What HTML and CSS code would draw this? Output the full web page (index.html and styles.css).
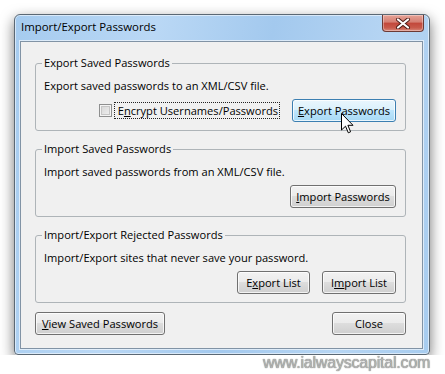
FILE: index.html
```html
<!DOCTYPE html>
<html>
<head>
<meta charset="utf-8">
<link rel="stylesheet" href="styles.css">
</head>
<body>
<div class="window">
  <div class="titlebar">
    <span class="title">Import/Export Passwords</span>
    <div class="close">
      <svg width="16" height="11" viewBox="0 0 16 11"><path d="M3 1.5 L13 9.5 M13 1.5 L3 9.5" stroke="#4a1a14" stroke-width="4" stroke-linecap="round"/><path d="M3 1.5 L13 9.5 M13 1.5 L3 9.5" stroke="#ffffff" stroke-width="2.2" stroke-linecap="round"/></svg>
    </div>
  </div>
  <div class="client">
    <fieldset class="group">
      <legend>Export Saved Passwords</legend>
      <p class="desc">Export saved passwords to an XML/CSV file.</p>
      <div class="row">
        <label class="check"><span class="box"></span><span class="focus">E<u>n</u>crypt Usernames/Passwords</span></label>
        <button class="btn hot w104"><u>E</u>xport Passwords</button>
      </div>
    </fieldset>
    <fieldset class="group">
      <legend>Import Saved Passwords</legend>
      <p class="desc">Import saved passwords from an XML/CSV file.</p>
      <div class="row">
        <button class="btn w106"><u>I</u>mport Passwords</button>
      </div>
    </fieldset>
    <fieldset class="group">
      <legend>Import/Export Rejected Passwords</legend>
      <p class="desc">Import/Export sites that never save your password.</p>
      <div class="row">
        <button class="btn w73">E<u>x</u>port List</button>
        <button class="btn w74 gap">I<u>m</u>port List</button>
      </div>
    </fieldset>
    <div class="footer">
      <button class="btn w130"><u>V</u>iew Saved Passwords</button>
      <button class="btn w74">Close</button>
    </div>
  </div>
</div>
<svg class="cursor" width="14" height="22" viewBox="0 0 14 22"><path d="M0.5 0.5 L0.5 17 L4.5 13.2 L7.3 19.8 L9.6 18.8 L6.9 12.3 L12 12.3 Z" fill="#ffffff" stroke="#000000" stroke-width="1" stroke-linejoin="miter"/></svg>
<div class="watermark">www.ialwayscapital.com</div>
</body>
</html>
```
FILE: styles.css
```css
html, body {
  margin: 0;
  padding: 0;
  background: #ffffff;
}
body {
  padding: 14px 0 0 14px;
  font-family: "Open Sans", "Noto Sans", sans-serif;
  font-size: 11.1px;
  color: #000;
}
.window {
  width: 416px;
  height: 341px;
  box-sizing: border-box;
  border: 1px solid #5b6874;
  border-radius: 6px 6px 4px 4px;
  background: linear-gradient(100deg, #a5cbef 0%, #bad8f5 30%, #a3c9ee 55%, #b6d5f3 80%, #a7ccef 100%);
  box-shadow: 0 5px 14px rgba(0,0,0,0.55), inset 0 0 0 1px rgba(255,255,255,0.55);
  display: flex;
  flex-direction: column;
}
.titlebar {
  height: 26px;
  display: flex;
  justify-content: space-between;
  align-items: flex-start;
  padding: 0 5px 0 6px;
}
.title {
  padding-top: 3px;
  line-height: 18px;
  font-size: 11.4px;
  color: #000;
}
.close {
  width: 42px;
  height: 17px;
  box-sizing: border-box;
  border: 1px solid #6c3a35;
  border-top: none;
  border-radius: 0 0 4px 4px;
  background: linear-gradient(#e6a296 0%, #d47e72 45%, #c2473a 50%, #c85a4b 80%, #d9897c 100%);
  display: flex;
  align-items: center;
  justify-content: center;
  box-shadow: inset 0 0 0 1px rgba(255,255,255,0.35);
}
.close svg { display: block; }
.client {
  margin: 0 6px 0 5px;
  height: 308px;
  box-sizing: border-box;
  border: 1px solid #8193a5;
  background: #f0f0f0;
  box-shadow: 0 0 0 1px rgba(255,255,255,0.6);
  padding: 13px 16px 14px 14px;
  display: flex;
  flex-direction: column;
}
.group {
  margin: 0 0 10px 0;
  padding: 0 9px 8px 8px;
  border: 1px solid #aeb4b8;
  border-radius: 3px;
  min-width: 0;
}
.group legend {
  padding: 0 2px;
  margin-left: -2px;
  line-height: 16px;
}
.desc {
  margin: 7px 0 0 0;
  line-height: 16px;
}
.row {
  margin-top: 5px;
  display: flex;
  justify-content: flex-end;
  align-items: center;
}
.check {
  display: flex;
  align-items: center;
  margin-right: 12px;
}
.box {
  width: 13px;
  height: 13px;
  box-sizing: border-box;
  border: 1px solid #8e8f8f;
  background: linear-gradient(135deg, #d3d3d3, #f3f3f3);
  box-shadow: inset 0 0 0 1px #f4f4f4, inset 0 0 0 2px #c6c6c6;
  margin-right: 2px;
}
.focus {
  border: 1px dotted #222;
  padding: 0 1px 0 3px;
  line-height: 15px;
}
.btn {
  height: 23px;
  box-sizing: border-box;
  font-family: inherit;
  font-size: inherit;
  color: #000;
  border: 1px solid #707070;
  border-radius: 3px;
  background: linear-gradient(#f2f2f2 0%, #ebebeb 49%, #dddddd 50%, #cfcfcf 100%);
  box-shadow: inset 0 0 0 1px rgba(255,255,255,0.75);
  padding: 0;
  margin: 0;
  line-height: 19px;
}
.btn.hot {
  border-color: #3c7fb1;
  background: linear-gradient(#eaf6fd 0%, #d9f0fc 49%, #bee6fd 50%, #a7d9f5 100%);
}
.w104 { width: 104px; }
.w106 { width: 106px; }
.w73 { width: 73px; }
.w74 { width: 74px; }
.w130 { width: 130px; }
.gap { margin-left: 12px; }
.footer {
  margin-top: -1px;
  display: flex;
  justify-content: space-between;
}
.cursor {
  position: absolute;
  left: 341px;
  top: 113px;
}
.watermark {
  position: absolute;
  left: 263px;
  top: 354px;
  font-family: "Liberation Sans", sans-serif;
  font-size: 16px;
  letter-spacing: -0.2px;
  color: #b4b4b4;
  text-shadow: 0 0 1px #555;
}
```
